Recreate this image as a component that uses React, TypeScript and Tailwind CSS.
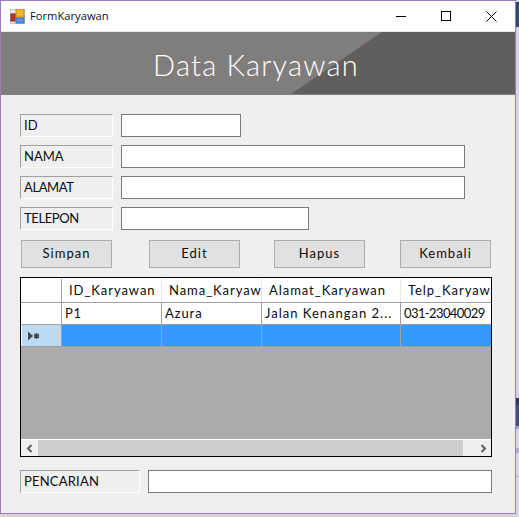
const uiFont = "font-['Lato',sans-serif] text-[13px] text-[#0c0c14]";

const Field = ({ label, inputWidth, tracking }: { label: string; inputWidth: string; tracking: string }) => (
    <div className="flex h-[23px] items-start">
        <div className="flex h-[23px] w-[93px] items-center border border-b-white border-l-[#a0a0a0] border-r-white border-t-[#a0a0a0] pl-[3px]">
            <span className={`${uiFont} ${tracking}`}>{label}</span>
        </div>
        <div className={`ml-[8px] h-[23px] border border-[#7a7a7a] bg-white ${inputWidth}`} />
    </div>
);

const ActionButton = ({ label }: { label: string }) => (
    <button className={`flex h-[28px] w-[91px] items-center justify-center border border-[#adadad] bg-[#e1e1e1] tracking-[1px] ${uiFont}`}>
        {label}
    </button>
);

const RowMarker = () => (
    <svg width="14" height="10" viewBox="0 0 14 10">
        <path d="M1 0.5 L1 9.5 L6 5 Z" fill="#444" />
        <path d="M9.5 2 V8 M7 3.5 L12 6.5 M12 3.5 L7 6.5" stroke="#444" strokeWidth="1.5" />
    </svg>
);

const HeaderCell = ({ label, width }: { label: string; width: string }) => (
    <div className={`flex h-full shrink-0 items-center overflow-hidden whitespace-nowrap border-r border-[#e6e6e6] pl-[7px] tracking-[0.95px] ${width} ${uiFont}`}>
        {label}
    </div>
);

const DataCell = ({ value, width, tracking }: { value: string; width: string; tracking: string }) => (
    <div className={`flex h-full shrink-0 items-center overflow-hidden whitespace-nowrap border-r border-[#a0a0a0] pl-[3px] ${tracking} ${width} ${uiFont}`}>
        {value}
    </div>
);

const EmptyCell = ({ width }: { width: string }) => (
    <div className={`h-full shrink-0 border-r border-[#a0a0a0] ${width}`} />
);

// what shows of the desktop behind the window, 3px to the right of it
const DesktopStrip = () => (
    <div className="flex h-full w-[3px] shrink-0 flex-col bg-[#dadada]">
        <div className="h-[2px] bg-[#d4d4d8]" />
        <div className="h-[25px] bg-[#2e4a66]" />
        <div className="h-px bg-[#d8d4a0]" />
        <div className="h-[370px] bg-[#d6d6d6]" />
        <div className="h-[7px] bg-[#2e3e52]" />
        <div className="h-[21px] bg-[#42536f]" />
        <div className="h-[3px] bg-[#98a3b4]" />
        <div className="h-[19px]" />
        <div className="h-[5px] bg-[#a9b5c5]" />
        <div className="h-[23px]" />
        <div className="h-px bg-[#b0b0b0]" />
    </div>
);

export default function App() {
    return (
        <div className="flex h-[517px] w-[519px] overflow-hidden bg-[#d6d6d6]">
            <div className="flex h-[514px] w-[516px] shrink-0 flex-col border border-[#9b7cc4] bg-[#efefef]">
                {/* title bar */}
                <div className="flex h-[30px] shrink-0 items-center bg-white pl-[9px]">
                    <svg width="15" height="15" viewBox="0 0 15 15">
                        <rect x="0.5" y="0.5" width="14" height="14" fill="#e8e8e8" stroke="#c4c4c4" />
                        <rect x="6" y="0" width="8" height="8" fill="#f0b92c" stroke="#b98a1c" />
                        <rect x="1" y="5" width="4" height="7" fill="#c8322b" stroke="#8a1f1a" />
                        <rect x="6" y="9" width="8" height="5" fill="#5b93e0" stroke="#3d6cb0" />
                    </svg>
                    <span className="ml-[5px] font-['Open_Sans',sans-serif] text-[11.2px] text-[#10101c]">FormKaryawan</span>
                    <div className="ml-auto flex items-center">
                        <div className="h-px w-[10px] bg-black" />
                        <div className="ml-[35px] h-[10px] w-[10px] border border-black" />
                        <svg className="ml-[35px] mr-[18px]" width="11" height="11" viewBox="0 0 11 11">
                            <path d="M0.5 0.5 L10.5 10.5 M10.5 0.5 L0.5 10.5" stroke="#000" strokeWidth="1" />
                        </svg>
                    </div>
                </div>

                {/* banner */}
                <div className="relative flex h-[64px] shrink-0 items-center justify-center border-t border-[#e8e8e8] bg-[#807d7d] pr-[4px] pt-[2px]">
                    <svg className="absolute inset-0" width="514" height="62" viewBox="0 0 514 62">
                        <polygon points="381,0 514,0 514,62 290,62" fill="#605f5d" />
                    </svg>
                    <span className="relative font-['Lato',sans-serif] text-[29px] font-light tracking-[1.2px] text-white">Data Karyawan</span>
                </div>

                {/* form */}
                <div className="flex flex-col gap-[8px] pl-[19px] pt-[19px]">
                    <Field label="ID" inputWidth="w-[120px]" tracking="tracking-normal" />
                    <Field label="NAMA" inputWidth="w-[344px]" tracking="tracking-normal" />
                    <Field label="ALAMAT" inputWidth="w-[344px]" tracking="tracking-[-0.4px]" />
                    <Field label="TELEPON" inputWidth="w-[188px]" tracking="tracking-[-0.4px]" />
                </div>

                {/* buttons */}
                <div className="mt-[10px] flex pl-[20px]">
                    <ActionButton label="Simpan" />
                    <div className="ml-[37px]"><ActionButton label="Edit" /></div>
                    <div className="ml-[34px]"><ActionButton label="Hapus" /></div>
                    <div className="ml-[35px]"><ActionButton label="Kembali" /></div>
                </div>

                {/* grid */}
                <div className="ml-[19px] mt-[9px] flex h-[180px] w-[472px] flex-col overflow-hidden border border-black bg-[#ababab]">
                    <div className="flex h-[25px] shrink-0 border-b border-t border-b-[#a0a0a0] border-t-white bg-white">
                        <div className="w-[41px] shrink-0 border-r border-[#a0a0a0]" />
                        <HeaderCell label="ID_Karyawan" width="w-[100px]" />
                        <HeaderCell label="Nama_Karyawan" width="w-[100px]" />
                        <HeaderCell label="Alamat_Karyawan" width="w-[139px]" />
                        <HeaderCell label="Telp_Karyawan" width="w-[100px]" />
                    </div>
                    <div className="flex h-[22px] shrink-0 border-b border-[#a0a0a0] bg-white">
                        <div className="w-[41px] shrink-0 border-r border-[#a0a0a0]" />
                        <DataCell value="P1" width="w-[100px]" tracking="tracking-[0.6px]" />
                        <DataCell value="Azura" width="w-[100px]" tracking="tracking-[0.9px]" />
                        <DataCell value="Jalan Kenangan 2..." width="w-[139px]" tracking="tracking-[1px]" />
                        <DataCell value="031-23040029" width="w-[100px]" tracking="tracking-[-0.6px]" />
                    </div>
                    <div className="flex h-[22px] shrink-0 border-b border-[#a0a0a0] bg-[#3399ff]">
                        <div className="flex w-[41px] shrink-0 items-center border-l border-r border-l-white border-r-[#a0a0a0] bg-[#bbdaf3] pl-[5px]">
                            <RowMarker />
                        </div>
                        <EmptyCell width="w-[100px]" />
                        <EmptyCell width="w-[100px]" />
                        <EmptyCell width="w-[139px]" />
                        <EmptyCell width="w-[100px]" />
                    </div>
                    <div className="flex-1" />
                    <div className="flex h-[17px] shrink-0 items-center border-t border-white bg-[#cdcdcd]">
                        <div className="flex h-full w-[17px] items-center justify-center bg-[#f0f0f0]">
                            <svg width="7" height="9" viewBox="0 0 7 9">
                                <path d="M5.5 1 L2 4.5 L5.5 8" fill="none" stroke="#606060" strokeWidth="2" />
                            </svg>
                        </div>
                        <div className="ml-auto flex h-full w-[28px] items-center justify-center bg-[#f0f0f0] pl-[12px]">
                            <svg width="7" height="9" viewBox="0 0 7 9">
                                <path d="M1.5 1 L5 4.5 L1.5 8" fill="none" stroke="#606060" strokeWidth="2" />
                            </svg>
                        </div>
                    </div>
                </div>

                {/* search */}
                <div className="ml-[19px] mt-[13px] flex">
                    <div className="flex h-[23px] w-[120px] items-center border border-b-white border-l-[#a0a0a0] border-r-white border-t-[#a0a0a0] pl-[3px]">
                        <span className={`${uiFont} tracking-[0.2px]`}>PENCARIAN</span>
                    </div>
                    <div className="ml-[8px] h-[23px] w-[344px] border border-[#7a7a7a] bg-white" />
                </div>
            </div>
            <DesktopStrip />
        </div>
    );
}
